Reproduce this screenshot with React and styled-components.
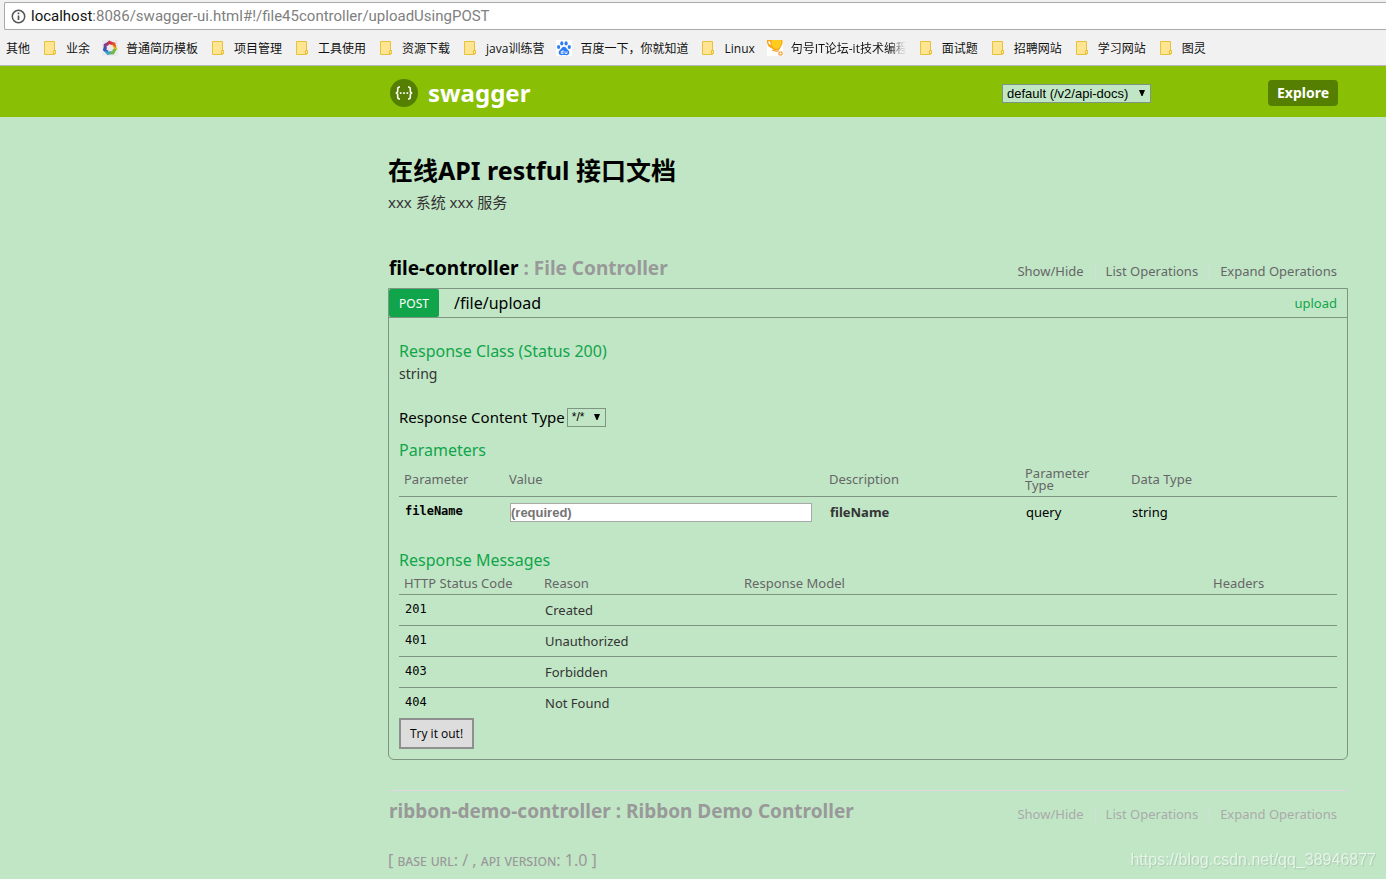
import React from "react";
import styled, { createGlobalStyle } from "styled-components";

const GlobalStyle = createGlobalStyle`
  * {
    box-sizing: border-box;
  }

  body {
    margin: 0;
    background-color: #c1e6c6;
    color: #333;
    font-family: "Noto Sans", "Noto Sans CJK SC", sans-serif;
    font-size: 13px;
    line-height: 16px;
  }

  a {
    color: inherit;
    text-decoration: none;
  }
`;

const BrowserBar = styled.div`
  background-color: #f1f1f1;
  border-bottom: 1px solid #b6b6b6;
  padding-top: 2px;
`;

const AddressBar = styled.div`
  display: flex;
  align-items: center;
  gap: 5px;
  height: 28px;
  margin-left: 4px;
  padding-left: 6px;
  border: 1px solid #a9a9a9;
  border-right: 0;
  border-radius: 2px 0 0 2px;
  background-color: #fff;
  color: #808080;
  font-family: Roboto, sans-serif;
  font-size: 15px;
  white-space: nowrap;

  b {
    color: #111;
    font-weight: 400;
  }
`;

const Bookmarks = styled.nav`
  display: flex;
  align-items: center;
  height: 35px;
  padding: 2px 0 0 6px;
  overflow: hidden;
  color: #111;
  font-family: "Open Sans", "Noto Sans CJK SC", sans-serif;
  font-size: 12px;

  svg {
    margin-bottom: 1px;
  }
`;

const Bookmark = styled.a`
  display: flex;
  flex: none;
  align-items: center;
  gap: ${(p) => (p.$folder ? 9 : 8)}px;
  margin-right: 12px;
  padding-left: ${(p) => (p.$folder ? 2 : 0)}px;
  white-space: nowrap;
`;

const FadedLabel = styled.span`
  width: 115px;
  overflow: hidden;
  mask-image: linear-gradient(to right, #000 85%, transparent);
`;

const Columns = styled.div`
  display: grid;
  grid-template-columns: 388px minmax(0, 1fr) 38px;

  > * {
    grid-column: 2;
  }
`;

const Header = styled.header`
  background-color: #89bf04;
`;

const HeaderInner = styled.div`
  display: flex;
  align-items: center;
  height: 51px;
  padding: 3px 10px 0 2px;
`;

const Logo = styled.a`
  display: flex;
  flex: 1;
  align-items: center;
  gap: 10px;
  color: #fff;
  font-size: 24px;
  font-weight: 700;
  line-height: 26px;
`;

const SelectBox = styled.span`
  position: relative;
  display: inline-flex;
  width: ${(p) => p.$width}px;
  margin-right: ${(p) => p.$gap || 0}px;

  svg {
    position: absolute;
    top: 6px;
    right: 6px;
    pointer-events: none;
  }
`;

const Select = styled.select`
  appearance: none;
  width: 100%;
  height: 19px;
  padding: 0 4px;
  border: 1px solid #7d9581;
  border-radius: 0;
  background-color: #c1e6c6;
  color: #000;
  font-family: "Liberation Sans", Arial, sans-serif;
  font-size: ${(p) => p.$size}px;
`;

const ExploreButton = styled.button`
  width: 70px;
  height: 26px;
  padding: 0 0 2px;
  border: 0;
  border-radius: 4px;
  background-color: #547f00;
  color: #fff;
  font-family: inherit;
  font-size: 14px;
  font-weight: 700;
`;

const Title = styled.h1`
  margin: 33px 0 0;
  color: #000;
  font-size: 25px;
  font-weight: 700;
  line-height: 40px;
`;

const Description = styled.p`
  margin: 0;
  font-size: 15px;
  line-height: 24px;
`;

const ResourceHeading = styled.div`
  display: flex;
  align-items: center;
  justify-content: space-between;
  height: 40px;
  margin: ${(p) => (p.$active ? 33 : 30)}px 0 1px;
  padding: 0 11px 0 1px;
  border-top: 1px solid ${(p) => (p.$active ? "transparent" : "#dfd8de")};
`;

const ResourceName = styled.h2`
  margin: 0;
  color: ${(p) => (p.$active ? "#000" : "#999")};
  font-size: 19px;
  font-weight: 700;
  line-height: 26px;

  span {
    color: #999;
  }
`;

const Options = styled.ul`
  display: flex;
  margin: 6px 0 0;
  padding: 0;
  color: ${(p) => (p.$active ? "#666" : "#aaa")};
  list-style: none;

  li + li {
    margin-left: 11px;
    padding-left: 10px;
    border-left: 1px solid #dfd8de;
  }
`;

const Operation = styled.section`
  border: 1px solid #7d9581;
  border-radius: 0 0 6px 6px;
`;

const OperationHeading = styled.h3`
  display: flex;
  align-items: center;
  height: 29px;
  margin: 0;
  padding-right: 10px;
  border-bottom: 1px solid #7d9581;
  font-size: 13px;
  font-weight: 400;
`;

const Method = styled.a`
  width: 50px;
  margin-right: 15px;
  padding-top: 2px;
  border-radius: 2px;
  background-color: #10a54a;
  color: #fff;
  font-size: 12px;
  line-height: 26px;
  text-align: center;
`;

const Path = styled.a`
  flex: 1;
  color: #000;
  font-size: 16px;
  line-height: 28px;
`;

const Nickname = styled.a`
  color: #10a54a;
`;

const OperationBody = styled.div`
  padding: 22px 10px 10px;
`;

const SectionTitle = styled.h4`
  margin: 0;
  color: #10a54a;
  font-size: 16px;
  font-weight: 400;
  line-height: 22px;
`;

const ResponseType = styled.div`
  font-size: 14px;
  line-height: 24px;
`;

const ContentType = styled.div`
  display: flex;
  align-items: center;
  gap: 2px;
  margin: 20px 0 11px;
  color: #000;
  font-size: 15px;
  line-height: 22px;
`;

const Table = styled.table`
  width: 100%;
  border-collapse: collapse;
  table-layout: fixed;

  th {
    height: ${(p) => p.$head}px;
    padding: 2px 5px 0;
    border-bottom: 1px solid #7d9581;
    color: #666;
    font-weight: 400;
    line-height: 12px;
    text-align: left;
  }

  td {
    height: 31px;
    padding: 0 6px;
    color: ${(p) => p.$ink};
  }

  tr + tr td {
    border-top: 1px solid #7d9581;
  }
`;

const Code = styled.code`
  display: block;
  padding-bottom: 1px;
  color: #000;
  font-family: "DejaVu Sans Mono", monospace;
  font-size: 12px;
  font-weight: ${(p) => (p.$bold ? 700 : 400)};
`;

const RequiredInput = styled.input`
  display: block;
  width: 302px;
  height: 19px;
  margin-top: 2px;
  padding: 0;
  border: 1px solid #a9a9a9;
  background-color: #fff;
  font-family: "Liberation Sans", Arial, sans-serif;
  font-size: 13px;
  font-weight: 700;

  &::placeholder {
    color: #757575;
  }
`;

const Strong = styled.strong`
  color: #333;
`;

const ResponseTitle = styled(SectionTitle)`
  margin-top: 22px;
`;

const TryButton = styled.button`
  display: block;
  width: 75px;
  height: 31px;
  padding: 0;
  border: 2px solid #8f8f8f;
  background-color: #ddd;
  color: #000;
  font-family: "Open Sans", sans-serif;
  font-size: 12px;
`;

const ApiInfo = styled.footer`
  padding: 18px 0 8px;
  color: #999;
  font-size: 16px;
  line-height: 22px;

  span {
    font-size: 15px;
    font-variant: small-caps;
  }
`;

const Watermark = styled.div`
  position: fixed;
  right: 10px;
  bottom: 8px;
  color: rgba(255, 255, 255, 0.65);
  font-family: "Liberation Sans", Arial, sans-serif;
  font-size: 16px;
  line-height: 22px;
  text-shadow: 1px 1px 1px rgba(110, 140, 115, 0.3);
`;

function InfoIcon() {
  return (
    <svg width="15" height="15" viewBox="0 0 15 15" fill="none" stroke="#555" strokeWidth="1.5">
      <circle cx="7.5" cy="7.5" r="6.2" />
      <path d="M7.5 6.5v4.5M7.5 3.6v1.6" strokeWidth="1.7" />
    </svg>
  );
}

function FolderIcon() {
  return (
    <svg width="13" height="16" viewBox="0 0 13 16" fill="#ffe591" stroke="#e8c13c">
      <path d="M.5 1.5h10v9h1v3h-1v1H.5z" />
      <path d="M9.5 14v-3.5h2v3z" />
    </svg>
  );
}

function ResumeIcon() {
  const colors = ["#f0bd1c", "#e0592a", "#cf2f4a", "#7b3e97", "#2d5db5", "#38a3c7", "#74b843"];
  return (
    <svg width="16" height="16" viewBox="0 0 16 16">
      <path fill="#e9eaee" d="M0 0h16v16H0z" />
      {colors.map((color, i) => (
        <path
          key={color}
          d="M3.500 3 9 .6l3.600 3.600L8.500 4 6 5.500z"
          fill={color}
          transform={`rotate(${90 - (i * 360) / 7} 8 8)`}
        />
      ))}
    </svg>
  );
}

function PawIcon() {
  return (
    <svg width="16" height="16" viewBox="0 0 16 16">
      <path fill="#fff" d="M0 0h16v16H0z" />
      <g fill="#2d7df6">
        <ellipse cx="2.6" cy="7" rx="1.6" ry="2" />
        <ellipse cx="5.8" cy="3.4" rx="1.6" ry="2.1" />
        <ellipse cx="10.1" cy="3.4" rx="1.6" ry="2.1" />
        <ellipse cx="13.3" cy="7" rx="1.6" ry="2" />
        <path d="M8 6.800c2 0 2.600 2 4 3.300 2.600 2.200 1 5.400-1.500 5.200-1.700-.3-3.300-.3-5 0C3 15.500 1.400 12.300 4 10.100 5.400 8.800 6 6.800 8 6.800z" />
      </g>
      <path d="M7 10v3.500H5.200v-2H7M9 11.300v2.200h2v-2.200" fill="none" stroke="#fff" strokeWidth=".8" />
    </svg>
  );
}

function TrophyIcon() {
  return (
    <svg width="16" height="16" viewBox="0 0 16 16">
      <path fill="#fff" d="M0 0h16v16H0z" />
      <path fill="#f9a51b" d="M0 0h15.500v4l-3.500 6-4 1-3-2.500-3.500-2L0 3z" />
      <path fill="#fff" d="M1.200 1.300H3L4 5 2 4z" />
      <path fill="#ffcb1f" d="M4.500 0h9.500l.5 4-3 4.500-3 1L5 6z" />
      <path fill="none" stroke="#f6a33a" d="m5 10.200 5 1.300 2-1" />
      <circle cx="13.500" cy="13.500" r="1.700" fill="#fff" stroke="#f6a33a" strokeWidth="1.300" />
    </svg>
  );
}

function SwaggerIcon() {
  return (
    <svg width="28" height="28" viewBox="0 0 28 28">
      <circle cx="14" cy="14" r="14" fill="#547f00" />
      <g fill="none" stroke="#fff" strokeWidth="1.600">
        <path d="M10 8h-.5C8 8 7.700 8.700 7.700 10v2c0 1.300-.7 2-2 2 1.300 0 2 .7 2 2v2c0 1.400.3 2 1.800 2h.5" />
        <path d="M18 8h.5c1.500 0 1.800.7 1.800 2v2c0 1.300.7 2 2 2-1.300 0-2 .7-2 2v2c0 1.400-.3 2-1.800 2H18" />
      </g>
      <path fill="#fff" d="M9.800 13.200h1.700v1.700H9.800zM13.200 13.200h1.700v1.700h-1.700zM16.500 13.200h1.700v1.700h-1.700z" />
    </svg>
  );
}

function Arrow() {
  return (
    <svg width="6" height="6" viewBox="0 0 6 6">
      <path d="M0 0h6L3.500 6h-1z" />
    </svg>
  );
}

const bookmarks = [
  { label: "业余" },
  { label: "普通简历模板", icon: <ResumeIcon /> },
  { label: "项目管理" },
  { label: "工具使用" },
  { label: "资源下载" },
  { label: "java训练营" },
  { label: "百度一下，你就知道", icon: <PawIcon /> },
  { label: "Linux" },
  { label: "句号IT论坛-it技术编程", icon: <TrophyIcon />, faded: true },
  { label: "面试题" },
  { label: "招聘网站" },
  { label: "学习网站" },
  { label: "图灵" },
];

const messages = [
  ["201", "Created"],
  ["401", "Unauthorized"],
  ["403", "Forbidden"],
  ["404", "Not Found"],
];

function Resource({ name, title, active }) {
  return (
    <ResourceHeading $active={active}>
      <ResourceName $active={active}>
        <a href="#resource">{name}</a> <span>: {title}</span>
      </ResourceName>
      <Options $active={active}>
        <li><a href="#toggle">Show/Hide</a></li>
        <li><a href="#list">List Operations</a></li>
        <li><a href="#expand">Expand Operations</a></li>
      </Options>
    </ResourceHeading>
  );
}

function ParametersTable() {
  return (
    <Table $head={35} $ink="#000">
      <colgroup>
        <col width="105" />
        <col width="320" />
        <col width="196" />
        <col width="106" />
        <col />
      </colgroup>
      <thead>
        <tr>
          <th>Parameter</th>
          <th>Value</th>
          <th>Description</th>
          <th>Parameter Type</th>
          <th>Data Type</th>
        </tr>
      </thead>
      <tbody>
        <tr>
          <td><Code as="label" htmlFor="fileName" $bold>fileName</Code></td>
          <td><RequiredInput id="fileName" placeholder="(required)" /></td>
          <td><Strong>fileName</Strong></td>
          <td>query</td>
          <td>string</td>
        </tr>
      </tbody>
    </Table>
  );
}

function MessagesTable() {
  return (
    <Table $head={23} $ink="#333">
      <colgroup>
        <col width="140" />
        <col width="200" />
        <col />
        <col width="129" />
      </colgroup>
      <thead>
        <tr>
          <th>HTTP Status Code</th>
          <th>Reason</th>
          <th>Response Model</th>
          <th>Headers</th>
        </tr>
      </thead>
      <tbody>
        {messages.map(([code, reason]) => (
          <tr key={code}>
            <td><Code>{code}</Code></td>
            <td>{reason}</td>
            <td />
            <td />
          </tr>
        ))}
      </tbody>
    </Table>
  );
}

export default function App() {
  return (
    <>
      <GlobalStyle />
      <BrowserBar>
        <AddressBar>
          <InfoIcon />
          <span><b>localhost</b>:8086/swagger-ui.html#!/file45controller/uploadUsingPOST</span>
        </AddressBar>
        <Bookmarks>
          <Bookmark href="#other">其他</Bookmark>
          {bookmarks.map(({ label, icon, faded }) => (
            <Bookmark key={label} href="#bookmark" $folder={!icon}>
              {icon || <FolderIcon />}
              {faded ? <FadedLabel>{label}</FadedLabel> : label}
            </Bookmark>
          ))}
        </Bookmarks>
      </BrowserBar>
      <Header>
        <Columns>
          <HeaderInner>
            <Logo href="#swagger">
              <SwaggerIcon />
              swagger
            </Logo>
            <SelectBox $width={149} $gap={117}>
              <Select aria-label="API" $size={13}>
                <option>default (/v2/api-docs)</option>
              </Select>
              <Arrow />
            </SelectBox>
            <ExploreButton>Explore</ExploreButton>
          </HeaderInner>
        </Columns>
      </Header>
      <Columns>
        <main>
          <Title>在线API restful 接口文档</Title>
          <Description>xxx 系统 xxx 服务</Description>
          <Resource name="file-controller" title="File Controller" active />
          <Operation>
            <OperationHeading>
              <Method href="#post">POST</Method>
              <Path href="#path">/file/upload</Path>
              <Nickname href="#upload">upload</Nickname>
            </OperationHeading>
            <OperationBody>
              <SectionTitle>Response Class (Status 200)</SectionTitle>
              <ResponseType>string</ResponseType>
              <ContentType>
                <label htmlFor="contentType">Response Content Type</label>
                <SelectBox $width={39}>
                  <Select id="contentType" $size={12}>
                    <option>*/*</option>
                  </Select>
                  <Arrow />
                </SelectBox>
              </ContentType>
              <SectionTitle>Parameters</SectionTitle>
              <ParametersTable />
              <ResponseTitle>Response Messages</ResponseTitle>
              <MessagesTable />
              <TryButton>Try it out!</TryButton>
            </OperationBody>
          </Operation>
          <Resource name="ribbon-demo-controller" title="Ribbon Demo Controller" />
          <ApiInfo>
            [ <span>base url</span>: / , <span>api version</span>: 1.0 ]
          </ApiInfo>
        </main>
      </Columns>
      <Watermark>https://blog.csdn.net/qq_38946877</Watermark>
    </>
  );
}
